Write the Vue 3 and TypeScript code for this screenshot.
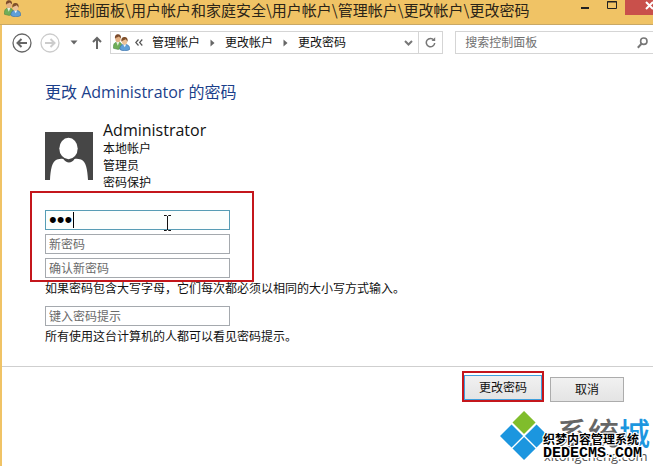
<script setup lang="ts">
import { ref } from 'vue'

const titlePath = '控制面板\\用户帐户和家庭安全\\用户帐户\\管理帐户\\更改帐户\\更改密码'
const crumbs: string[] = ['管理帐户', '更改帐户', '更改密码']
const details: string[] = ['本地帐户', '管理员', '密码保护']

const search = ref('')
const current = ref('abc')
const next = ref('')
const confirm = ref('')
const hint = ref('')
</script>

<template>
  <div class="window" lang="zh-CN">
    <svg width="0" height="0" class="defs" aria-hidden="true">
      <symbol id="users" viewBox="0 0 16 16">
        <path d="M0.5 13.5C0 9.5 1.500 7.500 4.500 7.500S8.500 9 8.500 12.500L5 14.500Z" fill="#6fae58" stroke="#4f8a45" stroke-width=".6" />
        <path d="M3 7.500L4.500 11L6 7.500Z" fill="#e8f0dd" />
        <ellipse cx="4.700" cy="4.200" rx="2.600" ry="3.400" fill="#e3b184" />
        <path d="M1.900 4.500C1.400 1.500 3 .3 4.800 .3S7.800 1.500 7.500 4C6.500 3.500 6 2.600 5.500 2.400C4.500 3.400 3 3 1.900 4.500Z" fill="#7b4a2b" />
        <path d="M6.500 14.500C6.200 11.300 7.800 9.700 11 9.700S16 11.500 15.700 14.500C13 16.300 9 16.300 6.500 14.500Z" fill="#5f9fd8" stroke="#3c6fa5" stroke-width=".6" />
        <path d="M9.500 9.700L11 12.500L12.500 9.700Z" fill="#eef5fb" />
        <ellipse cx="10.900" cy="6.800" rx="2.500" ry="3.200" fill="#ecc297" />
        <path d="M8 7.300C7.300 4 9 2.900 11 2.900S14.200 4.300 13.700 7.200C13 6.200 12.500 5.500 12 5C11 6 9 5.500 8 7.300Z" fill="#80502b" />
      </symbol>
    </svg>

    <header class="titlebar">
      <svg class="app-icon" viewBox="0 0 16 16"><use href="#users" /></svg>
      <h1 class="title">{{ titlePath }}</h1>
      <div class="controls">
        <button class="control" type="button" aria-label="最小化">
          <svg width="10" height="16" viewBox="0 0 10 16"><path d="M1 8H9" stroke="#222" stroke-width="2" /></svg>
        </button>
        <button class="control" type="button" aria-label="最大化">
          <svg width="10" height="16" viewBox="0 0 10 16"><path d="M.5 1.500H9.500V8.500H.5Z M0 2H10" fill="none" stroke="#222" /></svg>
        </button>
        <button class="control close" type="button" aria-label="关闭">
          <svg width="8" height="14" viewBox="0 0 8 14"><path d="M1 2L8 9M8 2L1 9" stroke="#fff" stroke-width="2" /></svg>
        </button>
      </div>
    </header>

    <div class="body">
      <nav class="toolbar">
        <button class="nav-btn" type="button" aria-label="后退">
          <svg width="20" height="20" viewBox="0 0 20 20" fill="none" stroke="#666">
            <circle cx="10" cy="10" r="9" stroke-width="1.300" />
            <path d="M15 10H6M9.500 6L5.500 10L9.500 14" stroke-width="2" />
          </svg>
        </button>
        <button class="nav-btn forward" type="button" aria-label="前进">
          <svg width="20" height="20" viewBox="0 0 20 20" fill="none" stroke="#ccc">
            <circle cx="10" cy="10" r="9" stroke-width="1.300" />
            <path d="M5 10H14M10.500 6L14.500 10L10.500 14" stroke-width="2" />
          </svg>
        </button>
        <button class="nav-btn recent" type="button" aria-label="最近位置">
          <svg width="8" height="5" viewBox="0 0 8 5"><path d="M.5 .5H7.500L4 4.500Z" fill="#666" /></svg>
        </button>
        <button class="nav-btn up" type="button" aria-label="上移">
          <svg width="10" height="13" viewBox="0 0 10 13" fill="none" stroke="#666" stroke-width="2"><path d="M5 13V2M1 6L5 2L9 6" /></svg>
        </button>

        <div class="address">
          <svg class="crumb-icon" viewBox="0 0 16 16"><use href="#users" /></svg>
          <svg class="chevrons" width="8" height="7" viewBox="0 0 8 7" fill="none" stroke="#555" stroke-width="1.200"><path d="M3.500 .5L.8 3.500L3.500 6.500M7.300 .5L4.600 3.500L7.300 6.500" /></svg>
          <ol class="crumbs">
            <li v-for="(crumb, i) in crumbs" :key="crumb" class="crumb">
              <svg v-if="i > 0" class="sep" width="5" height="8" viewBox="0 0 5 8"><path d="M.5 .5L4.500 4L.5 7.500Z" fill="#666" /></svg>
              <a href="#" class="crumb-link">{{ crumb }}</a>
            </li>
          </ol>
          <button class="addr-btn" type="button" aria-label="历史记录">
            <svg width="9" height="6" viewBox="0 0 9 6" fill="none" stroke="#777" stroke-width="2"><path d="M1 1L4.500 4.500L8 1" /></svg>
          </button>
          <button class="addr-btn refresh" type="button" aria-label="刷新">
            <svg width="11" height="11" viewBox="0 0 11 11"><path d="M8.800 3A4.200 4.200 0 1 0 9.700 6" fill="none" stroke="#777" stroke-width="1.500" /><path d="M6.500 3.900H10.200V.2Z" fill="#777" /></svg>
          </button>
        </div>

        <label class="search">
          <input v-model="search" class="search-input" type="text" placeholder="搜索控制面板" aria-label="搜索控制面板" />
          <svg width="11" height="12" viewBox="0 0 11 12" fill="none" stroke="#777"><circle cx="6.800" cy="4.200" r="3.200" stroke-width="1.600" /><path d="M4.500 6.800L.8 10.800" stroke-width="2" /></svg>
        </label>
      </nav>

      <form @submit.prevent>
        <main class="content">
          <h2 class="heading">更改 Administrator 的密码</h2>
          <section class="account">
            <svg class="avatar" viewBox="0 0 48 48">
              <path d="M0 0H48V48H0Z" fill="#464646" />
              <path d="M5 48C5.500 38 7 29 12 27.500C15 26.500 17 26.500 18.500 27C21 31.500 27 31.500 29.500 27C31 26.500 33 26.500 36 27.500C41 29 42.500 38 43 48Z" fill="#fff" />
              <ellipse cx="23.500" cy="16.500" rx="10.500" ry="12" fill="#464646" />
              <ellipse cx="23.500" cy="16.500" rx="9.200" ry="10.700" fill="#fff" />
            </svg>
            <div>
              <p class="name">Administrator</p>
              <p v-for="item in details" :key="item" class="detail">{{ item }}</p>
            </div>
          </section>

          <div class="passwords">
            <div class="field-wrap">
              <input v-model="current" class="field active" type="password" aria-label="当前密码" />
              <span class="caret"></span>
              <svg class="pointer" width="9" height="16" viewBox="0 0 9 16" fill="none" stroke="#111"><path d="M1 .5H3.500L4.500 1.500L5.500 .5H8M4.500 1V15M1 15.500H3.500L4.500 14.500L5.500 15.500H8" /></svg>
            </div>
            <input v-model="next" class="field" type="password" placeholder="新密码" aria-label="新密码" />
            <input v-model="confirm" class="field" type="password" placeholder="确认新密码" aria-label="确认新密码" />
          </div>
          <p class="note">如果密码包含大写字母，它们每次都必须以相同的大小写方式输入。</p>
          <input v-model="hint" class="field" type="text" placeholder="键入密码提示" aria-label="键入密码提示" />
          <p class="note">所有使用这台计算机的人都可以看见密码提示。</p>
        </main>

        <footer class="actions">
          <div class="primary-wrap"><button class="btn primary" type="submit">更改密码</button></div>
          <button class="btn" type="button">取消</button>
        </footer>
      </form>
    </div>

    <aside class="watermark">
      <svg class="mark" viewBox="0 0 52 52">
        <path d="M25 0L37 12L25 24L13 12Z" fill="#80bd2c" />
        <path d="M12 14L24 26L12 38L0 26ZM38 14L50 26L38 38L26 26ZM25 27L37 39L25 51L13 39Z" fill="#1c96df" />
      </svg>
      <span class="brand">系统<span class="brand-blue">城</span></span>
      <span class="site">xitongcheng.com</span>
      <span class="cms">织梦内容管理系统</span>
      <span class="cms-url">DEDECMS.COM</span>
    </aside>
  </div>
</template>

<style>
body {
  margin: 0;
  background: #fff;
}
</style>

<style scoped>
.window {
  position: relative;
  box-sizing: border-box;
  min-height: 100vh;
  display: flex;
  flex-direction: column;
  overflow: hidden;
  background: #f0c365;
  color: #111;
  font: 12px/17px "Open Sans", "Noto Sans CJK SC", sans-serif;
}
.defs { position: absolute; }
h1, h2, p, ol { margin: 0; padding: 0; font-weight: 400; }
button { margin: 0; padding: 0; border: 0; background: none; font: inherit; color: inherit; }
svg { display: block; flex: none; }

.titlebar {
  display: flex;
  align-items: flex-start;
  height: 24px;
  border-bottom: 1px solid #c9a865;
}
.app-icon { width: 17px; height: 17px; margin-left: 4px; }
.title {
  flex: 1;
  margin-left: 44px;
  font: 15px/20px "Noto Sans CJK SC", sans-serif;
  white-space: nowrap;
  color: #2b2418;
}
.controls { display: flex; }
.control { display: flex; align-items: flex-start; justify-content: center; width: 27px; height: 15px; }
.control.close { justify-content: flex-end; width: 28px; background: #c9504b; }

.body { flex: 1; margin-left: 2px; background: #fff; }

.toolbar { display: flex; align-items: center; padding-top: 6px; padding-left: 10px; }
.forward { margin-left: 8px; }
.recent { margin-left: 10px; }
.up { margin-left: 14px; }
.address {
  flex: 330;
  box-sizing: border-box;
  display: flex;
  align-items: center;
  height: 23px;
  margin-left: 8px;
  padding-left: 2px;
  border: 1px solid #d5d5d5;
}
.crumb-icon { width: 17px; height: 17px; }
.chevrons { margin-left: 5px; }
.crumbs { display: flex; flex: 1; margin-left: 9px; list-style: none; white-space: nowrap; }
.crumb { display: flex; align-items: center; }
.sep { margin: 0 10px; }
.crumb-link { color: #111; text-decoration: none; }
.addr-btn { display: flex; align-items: center; justify-content: center; width: 20px; height: 21px; }
.refresh { width: 24px; border-left: 1px solid #d5d5d5; }
.search {
  flex: 183;
  box-sizing: border-box;
  display: flex;
  align-items: center;
  height: 23px;
  margin-left: 12px;
  padding: 0 5px 0 9px;
  border: 1px solid #d5d5d5;
  border-right: 0;
}
.search-input {
  flex: 1;
  min-width: 0;
  padding: 0;
  border: 0;
  outline: 0;
  background: none;
  font: inherit;
}
.search-input::placeholder { color: #707070; }

.content { padding: 27px 43px 12px; }
.heading {
  font-size: 16px;
  line-height: 22px;
  color: #1b3f8b;
}
.account { display: flex; align-items: center; gap: 10px; margin-top: 18px; }
.avatar { width: 48px; height: 48px; }
.name { font-size: 16px; line-height: 19px; color: #111; }

.passwords {
  position: relative;
  display: flex;
  flex-direction: column;
  align-items: flex-start;
  gap: 4px;
  margin-top: 19px;
}
.passwords::after {
  content: "";
  position: absolute;
  inset: -19px auto -4px -15px;
  width: 220px;
  border: 2px solid #c4161c;
  pointer-events: none;
}
.field-wrap { position: relative; }
.field {
  display: block;
  box-sizing: border-box;
  width: 185px;
  height: 20px;
  padding: 0 3px;
  border: 1px solid #a5a9ae;
  border-radius: 0;
  outline: 0;
  background: #fff;
  font: inherit;
}
.field::placeholder { color: #6a6a6a; }
.field.active { border-color: #569db5; background: #fbfffd; color: #000; font: 22px/18px "Liberation Sans", sans-serif; }
.caret { position: absolute; left: 28px; top: 2px; width: 1px; height: 16px; background: #000; }
.pointer { position: absolute; left: 118px; top: 5px; }
.note { margin: 2px 0 9px; }

.actions {
  display: flex;
  justify-content: flex-end;
  align-items: flex-end;
  gap: 6px;
  padding: 4px 29px 0 0;
  border-top: 1px solid #cfcfcf;
}
.primary-wrap { border: 2px solid #c4161c; padding: 2px 0 0; }
.btn {
  display: block;
  box-sizing: border-box;
  width: 74px;
  height: 25px;
  border: 1px solid #acacac;
  background: linear-gradient(#f1f1f1, #e4e4e4);
}
.btn.primary { width: 78px; border-color: #3f9fdc; }

.watermark { position: absolute; right: 2px; bottom: 0; width: 151px; height: 56px; }
.mark { position: absolute; left: 0; top: 1px; width: 50px; height: 50px; }
.brand {
  position: absolute;
  left: 57px;
  top: 4px;
  font: 500 31px/36px "Noto Sans CJK SC", sans-serif;
  white-space: nowrap;
  color: #666;
}
.brand-blue { color: #1c96df; }
.site { position: absolute; left: 44px; top: 37px; font: 13px/18px "Open Sans", sans-serif; color: #555; }
.cms, .cms-url {
  position: absolute;
  left: 43px;
  white-space: nowrap;
  color: #000;
  text-shadow: 1px 0 #fff, -1px 0 #fff, 0 1px #fff, 0 -1px #fff, 1px 1px #fff, -1px -1px #fff, 1px -1px #fff, -1px 1px #fff;
}
.cms { top: 20px; font: 700 12px/18px "Noto Sans CJK SC", sans-serif; }
.cms-url { top: 36px; font: 700 15px/15px "Liberation Mono", monospace; }
</style>
